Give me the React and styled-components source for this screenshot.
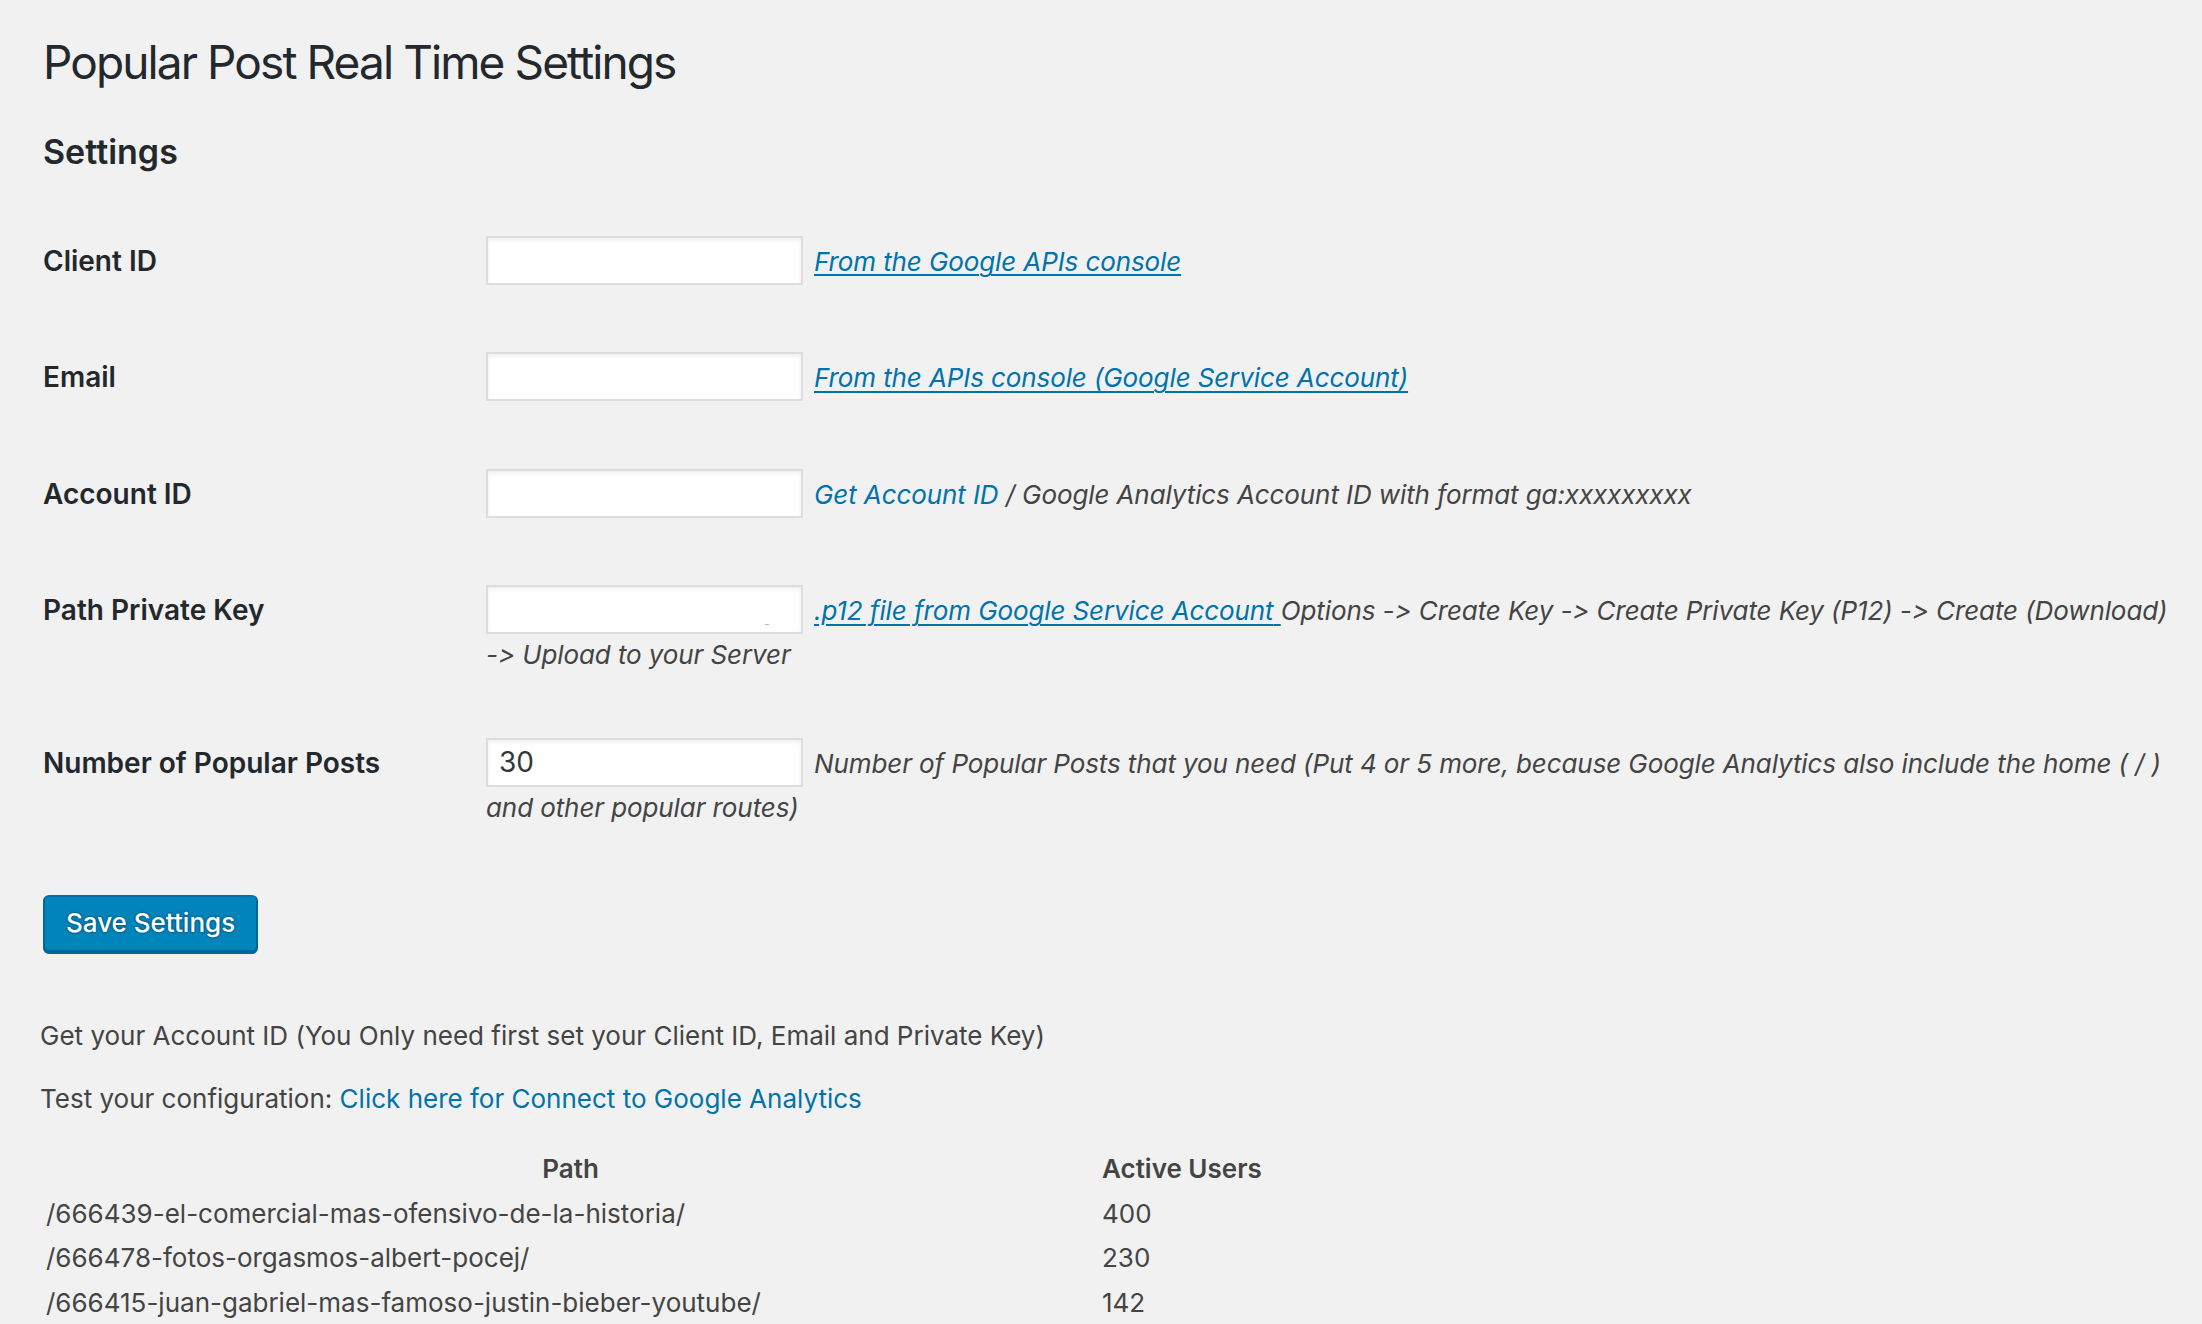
import styled, { createGlobalStyle } from 'styled-components'

const GlobalStyle = createGlobalStyle`
  * { box-sizing: border-box; }
  body {
    margin: 0;
    background: #f1f1f1;
    color: #444;
    font-family: Inter, 'Noto Sans', 'Liberation Sans', sans-serif;
    font-feature-settings: 'calt' 0;
  }
`

const Wrap = styled.div`
  padding: 33px 14px 40px 43px;
`

const Title = styled.h1`
  margin: 0;
  font-size: 46px;
  font-weight: 400;
  line-height: 1.3;
  letter-spacing: -1.9px;
  color: #23282d;
`

const SectionTitle = styled.h2`
  margin: 37px 0 0;
  font-size: 34px;
  font-weight: 600;
  line-height: 1.3;
  color: #23282d;
`

const FormTable = styled.table`
  width: 100%;
  margin-top: 29px;
  border-collapse: collapse;
`

const Label = styled.th`
  width: 423px;
  padding: 40px 20px 40px 0;
  text-align: left;
  vertical-align: top;
  font-size: 28px;
  font-weight: 600;
  line-height: 36.4px;
  color: #23282d;
`

const Field = styled.td`
  padding: 31px 0 31px 20px;
  vertical-align: top;
  font-size: 28px;
  line-height: 36.4px;
`

const TextInput = styled.input`
  width: 317px;
  height: 49px;
  margin: 2px 11px 2px 0;
  padding: 0 11px;
  border: 2px solid #ddd;
  box-shadow: inset 0 2px 4px rgba(0, 0, 0, 0.07);
  background: #fff;
  font-family: inherit;
  font-size: 28px;
  color: #32373c;
  vertical-align: baseline;
  outline: none;
  ${p => p.$mark && `
    background: linear-gradient(#bbb, #bbb) no-repeat 277px 37px / 4px 1px, #fff;
  `}
`

const Hint = styled.span`
  font-size: 26px;
  font-style: italic;
  letter-spacing: -0.1px;
  color: #444;
`

const Arrow = styled.span`
  white-space: nowrap;
`

const Link = styled.a`
  color: #0073aa;
  text-decoration: ${p => (p.$underline ? 'underline' : 'none')};
  text-decoration-thickness: 2px;
  text-underline-offset: 4px;
  cursor: pointer;
`

const SaveButton = styled.button`
  display: block;
  height: 57px;
  margin-top: 38px;
  padding: 0 21px 2px;
  border: 2px solid;
  border-color: #0073aa #006799 #006799;
  border-radius: 6px;
  background: #0085ba;
  box-shadow: 0 2px 0 #006799;
  color: #fff;
  font-family: inherit;
  font-size: 26px;
  font-weight: 500;
  text-shadow: 0 -1px 2px #006799, 1px 0 2px #006799, 0 1px 2px #006799, -1px 0 2px #006799;
  cursor: pointer;
`

const Para = styled.p`
  margin: ${p => (p.$first ? '65px' : '26px')} 0 0 -3px;
  font-size: 26px;
  line-height: 37px;
`

const Results = styled.div`
  display: grid;
  grid-template-columns: 1056px auto;
  justify-content: start;
  margin-top: 30px;
  font-size: 26px;
  line-height: 40.5px;
`

const Cell = styled.div`
  padding: 2px 4px 2px 3px;
  text-align: ${p => (p.$center ? 'center' : 'left')};
  font-weight: ${p => (p.$head ? 600 : 400)};
  color: #444;
`

const rows = [
  ['/666439-el-comercial-mas-ofensivo-de-la-historia/', 400],
  ['/666478-fotos-orgasmos-albert-pocej/', 230],
  ['/666415-juan-gabriel-mas-famoso-justin-bieber-youtube/', 142]
]

const arrow = <Arrow>-&gt;</Arrow>

export default function App() {
  return (
    <>
      <GlobalStyle />
      <Wrap>
        <Title>Popular Post Real Time Settings</Title>
        <SectionTitle>Settings</SectionTitle>
        <FormTable>
          <tbody>
            <tr>
              <Label>Client ID</Label>
              <Field>
                <TextInput type='text' />
                <Hint>
                  <Link $underline>From the Google APIs console</Link>
                </Hint>
              </Field>
            </tr>
            <tr>
              <Label>Email</Label>
              <Field>
                <TextInput type='text' />
                <Hint>
                  <Link $underline>From the APIs console (Google Service Account)</Link>
                </Hint>
              </Field>
            </tr>
            <tr>
              <Label>Account ID</Label>
              <Field>
                <TextInput type='text' />
                <Hint>
                  <Link>Get Account ID</Link> / Google Analytics Account ID with format ga:xxxxxxxxx
                </Hint>
              </Field>
            </tr>
            <tr>
              <Label>Path Private Key</Label>
              <Field>
                <TextInput type='text' $mark />
                <Hint>
                  <Link $underline>.p12 file from Google Service Account{' '}</Link>
                  Options {arrow} Create Key {arrow} Create Private Key (P12) {arrow} Create (Download) {arrow} Upload to your Server
                </Hint>
              </Field>
            </tr>
            <tr>
              <Label>Number of Popular Posts</Label>
              <Field>
                <TextInput type='text' defaultValue='30' />
                <Hint>
                  Number of Popular Posts that you need (Put 4 or 5 more, because Google Analytics also include the home ( / ) and other popular routes)
                </Hint>
              </Field>
            </tr>
          </tbody>
        </FormTable>
        <SaveButton>Save Settings</SaveButton>
        <Para $first>Get your Account ID (You Only need first set your Client ID, Email and Private Key)</Para>
        <Para>
          Test your configuration: <Link>Click here for Connect to Google Analytics</Link>
        </Para>
        <Results>
          <Cell $head $center>Path</Cell>
          <Cell $head>Active Users</Cell>
          {rows.map(([path, users]) => (
            <>
              <Cell key={path}>{path}</Cell>
              <Cell key={path + '-n'}>{users}</Cell>
            </>
          ))}
        </Results>
      </Wrap>
    </>
  )
}
